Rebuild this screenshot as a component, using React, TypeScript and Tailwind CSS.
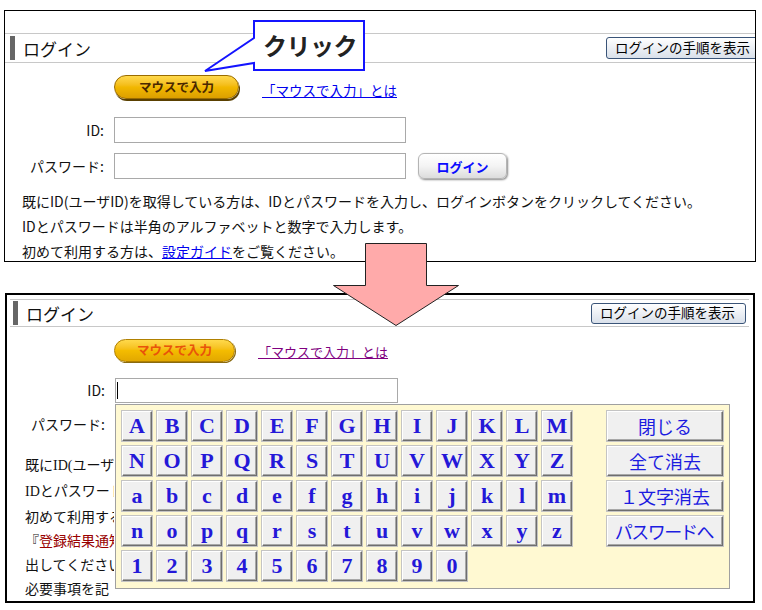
import React from "react";

const rows = ["ABCDEFGHIJKLM", "NOPQRSTUVWXYZ", "abcdefghijklm", "nopqrstuvwxyz", "1234567890"];
const side = ["閉じる", "全て消去", "１文字消去", "パスワードへ"];

function Key({ ch }: { ch: string }) {
  return (
    <div className="w-[30px] h-[30px] flex items-center justify-center bg-[#f0f0f0] border border-t-[#ffffff] border-l-[#ffffff] border-r-[#6e6e6e] border-b-[#6e6e6e] shadow-[inset_-1px_-1px_0_#a8a8a8,0_0_0_1px_#c4c4c4] font-['Liberation_Serif',serif] font-bold text-[22px] leading-none text-[#2418d8]">
      {ch}
    </div>
  );
}

function Keyboard() {
  return (
    <div className="absolute z-10 left-[-1px] top-[25px] w-[615px] h-[185px] bg-[#fff9d2] border border-[#a0a0a0] flex pt-[6px] pl-[6px]">
      <div className="flex flex-col gap-[5px]">
        {rows.map((r) => (
          <div key={r} className="flex gap-[5px]">
            {r.split("").map((c) => (
              <Key key={c} ch={c} />
            ))}
          </div>
        ))}
      </div>
      <div className="ml-[35px] flex flex-col gap-[5px]">
        {side.map((s) => (
          <div
            key={s}
            className={
              "w-[116px] h-[30px] flex items-center justify-center bg-[#f0f0f0] border border-t-[#ffffff] border-l-[#ffffff] border-r-[#6e6e6e] border-b-[#6e6e6e] shadow-[inset_-1px_-1px_0_#a8a8a8,0_0_0_1px_#c4c4c4] text-[18px] leading-none text-[#1c1ce0] " +
              (s === "パスワードへ" ? "[font-feature-settings:'palt']" : "")
            }
          >
            {s}
          </div>
        ))}
      </div>
    </div>
  );
}

export default function App() {
  return (
    <div className="relative w-[762px] h-[610px] bg-white overflow-hidden font-['Noto_Sans_CJK_JP','Noto_Sans',sans-serif] text-[#111]">
      {/* top panel */}
      <div className="ml-[4px] mt-[10px] w-[752px] h-[252px] border border-black overflow-hidden text-[14px]">
        <div className="mt-[22px] h-[30px] border-y border-[#c8c8c8] flex items-center">
          <div className="ml-[5px] w-[5px] h-[24px] bg-[#666666]" />
          <span className="ml-[8px] text-[17px] leading-none">ログイン</span>
          <div className="ml-auto mr-[-6px] w-[155px] h-[22px] shrink-0 rounded-[3px] border border-[#3a5478] bg-linear-to-b from-[#ffffff] to-[#d9e0ea] flex items-center pl-[8px] text-[13.5px] leading-none text-black">
            ログインの手順を表示
          </div>
        </div>
        <div className="flex items-start mt-[12px] pl-[109px]">
          <div className="w-[125px] h-[24px] rounded-full border border-[#9a6c00] bg-linear-to-b from-[#ffd94a] via-[#f2b800] to-[#dc9f00] shadow-[1px_2px_0_#5a4000] flex items-center justify-center text-[12.5px] font-bold leading-none text-[#4a2800]">
            マウスで入力
          </div>
          <a className="ml-[23px] mt-[5px] leading-[20px] text-[13.5px] text-[#0000ee] underline">「マウスで入力」とは</a>
        </div>
        <div className="flex items-center mt-[17px]">
          <div className="w-[99px] text-right">ID:</div>
          <div className="ml-[10px] w-[292px] h-[26px] border border-[#a9a9a9] bg-white" />
        </div>
        <div className="flex items-center mt-[10px]">
          <div className="w-[99px] text-right">パスワード:</div>
          <div className="ml-[10px] w-[292px] h-[26px] border border-[#a9a9a9] bg-white" />
          <div className="ml-[12px] w-[89px] h-[26px] rounded-[6px] border border-[#b4b4b4] bg-linear-to-b from-[#ffffff] via-[#f4f4f4] to-[#dcdcdc] shadow-[1px_1px_2px_#8a8a8a] flex items-center justify-center text-[13px] font-bold leading-none text-[#0a0aff]">
            ログイン
          </div>
        </div>
        <div className="mt-[10px] pl-[17px] leading-[25px] whitespace-nowrap">
          <div>既にID(ユーザID)を取得している方は、IDとパスワードを入力し、ログインボタンをクリックしてください。</div>
          <div>IDとパスワードは半角のアルファベットと数字で入力します。</div>
          <div>
            初めて利用する方は、<a className="text-[#0000ee] underline">設定ガイド</a>をご覧ください。
          </div>
        </div>
      </div>

      {/* bottom panel */}
      <div className="ml-[5px] mt-[31px] w-[750px] h-[310px] border-2 border-black overflow-hidden text-[14px]">
        <div className="mt-[4px] ml-[3px] mr-[4px] h-[28px] border-y border-[#c8c8c8] flex items-center">
          <div className="ml-[3px] w-[5px] h-[24px] bg-[#666666]" />
          <span className="ml-[8px] text-[17px] leading-none">ログイン</span>
          <div className="ml-auto mr-[3px] w-[155px] h-[21px] shrink-0 rounded-[3px] border border-[#3a5478] bg-linear-to-b from-[#ffffff] to-[#d9e0ea] flex items-center pl-[8px] text-[13.5px] leading-none text-black">
            ログインの手順を表示
          </div>
        </div>
        <div className="flex items-start mt-[12px] pl-[107px]">
          <div className="w-[121px] h-[23px] rounded-full border border-[#b08000] bg-linear-to-b from-[#ffd94a] via-[#f4bc00] to-[#e2a800] shadow-[1px_1px_0_#8a6a10] flex items-center justify-center text-[12.5px] font-bold leading-none text-[#e8540a]">
            マウスで入力
          </div>
          <a className="ml-[23px] mt-[3px] leading-[20px] text-[13px] text-[#800080] underline">「マウスで入力」とは</a>
        </div>
        <div className="flex items-center mt-[16px]">
          <div className="w-[98px] text-right">ID:</div>
          <div className="relative ml-[10px] w-[283px] h-[25px] border border-[#a9a9a9] bg-white">
            <span className="absolute left-[1px] top-[3px] w-[1px] h-[17px] bg-black" />
            <Keyboard />
          </div>
        </div>
        <div className="flex items-center mt-[8px]">
          <div className="w-[98px] text-right">パスワード:</div>
          <div className="ml-[10px] w-[283px] h-[26px] border border-[#a9a9a9] bg-white" />
        </div>
        <div className="mt-[15px] ml-[18px] w-[89px] overflow-hidden leading-[24px] whitespace-nowrap">
          <div>
            既に<span className="font-['Liberation_Serif',serif]">ID(</span>ユーザ
          </div>
          <div>
            <span className="font-['Liberation_Serif',serif]">ID</span>とパスワード
          </div>
          <div>初めて利用する</div>
          <div>
            『<span className="text-[#990000]">登録結果通知</span>
          </div>
          <div>出してください</div>
          <div>必要事項を記</div>
        </div>
      </div>

      {/* overlays: arrow + callout */}
      <svg className="absolute left-0 top-0 pointer-events-none" width="762" height="610" viewBox="0 0 762 610">
        <polygon
          points="365.5,243.5 426.5,243.5 426.5,285.5 458.5,285.5 396,325.5 333.5,285.5 365.5,285.5"
          fill="#ffaaaa"
          stroke="#222"
          strokeWidth="1"
        />
        <path d="M254 21 H364 V70 H254 V63 L205 71 L254 38 Z" fill="#ffffff" stroke="#1414ff" strokeWidth="2" strokeLinejoin="miter" />
      </svg>
      <span className="absolute left-[263px] top-[33px] text-[24px] font-bold leading-none text-[#222222] tracking-[-0.5px]">クリック</span>
    </div>
  );
}
